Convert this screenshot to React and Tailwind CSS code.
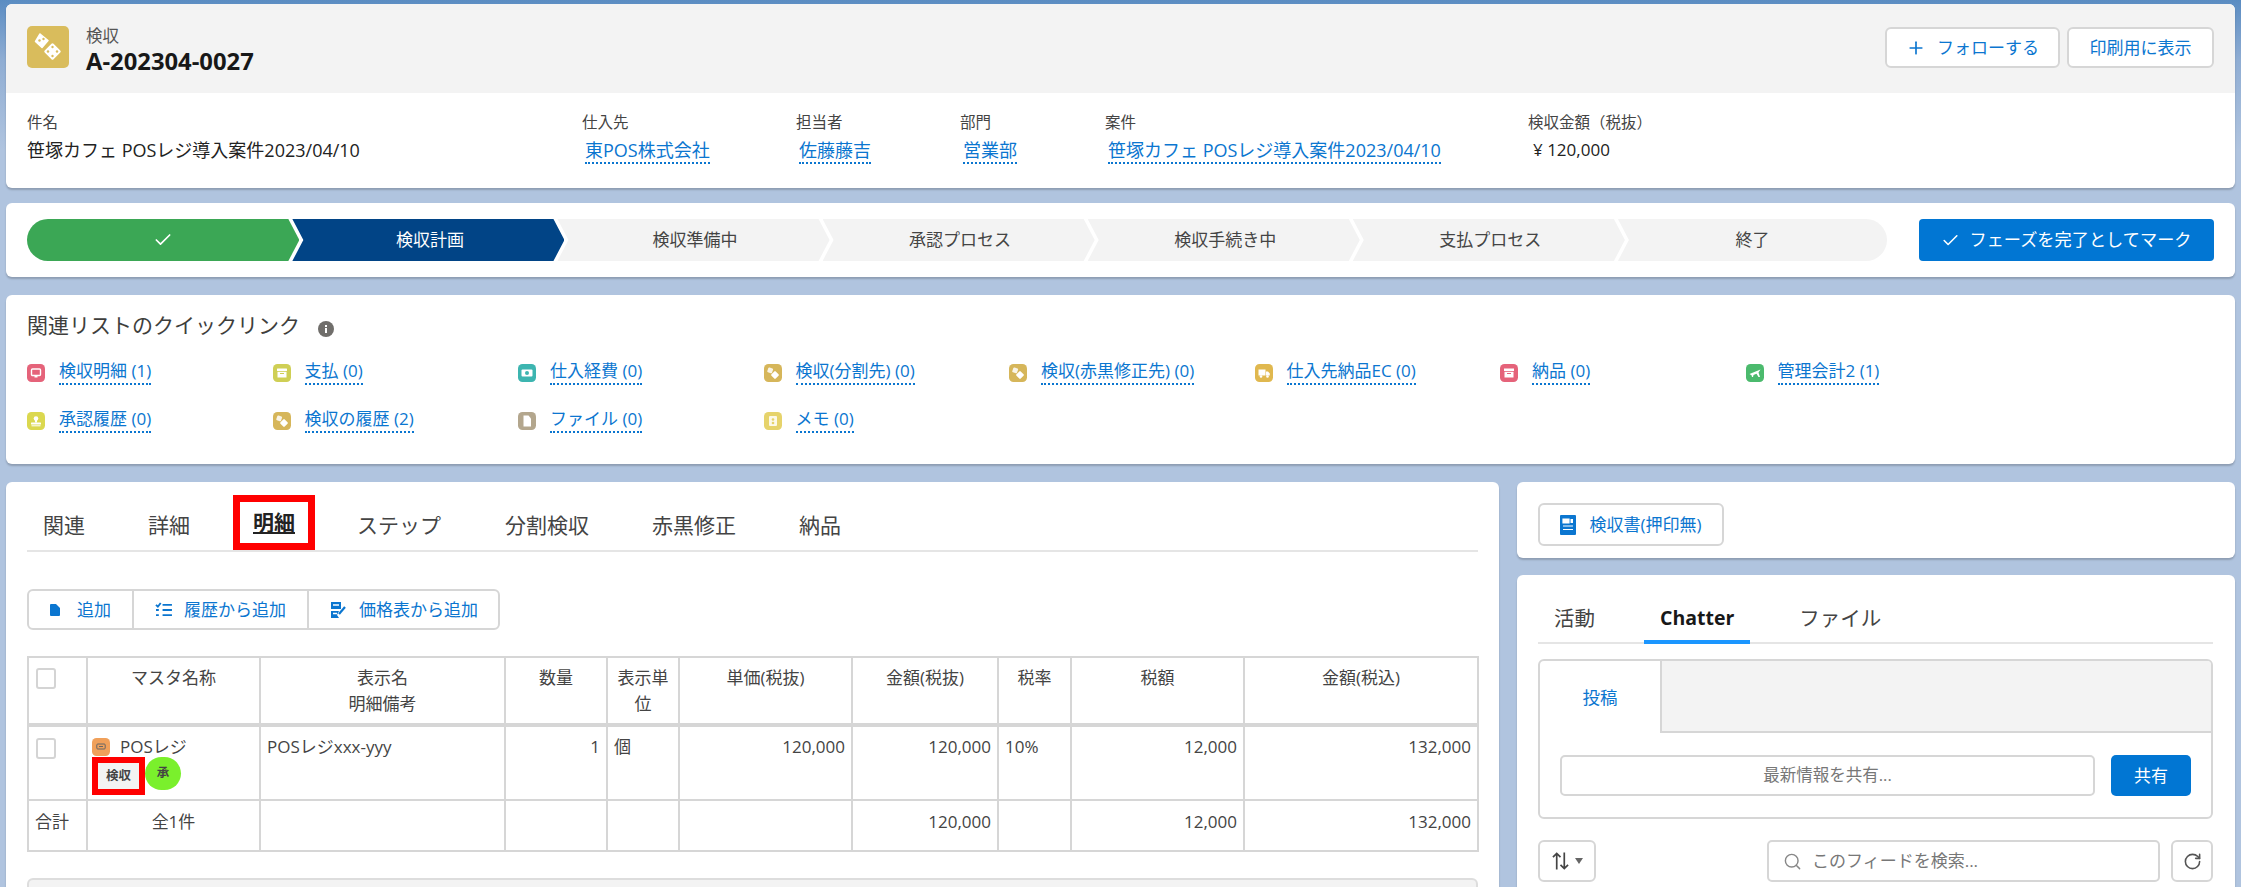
import React from "react";
import { Check, Plus, Search, RotateCw } from "lucide-react";

const Dice = () => (
  <svg viewBox="0 0 42 42" className="w-[42px] h-[42px]">
    <path d="M13 8 L21 14.500 L15 21.500 L8.500 15.500 Z" fill="#fff" stroke="#fff" strokeWidth="1.500" strokeLinejoin="round" />
    <rect x="19.250" y="19.250" width="12.500" height="12.500" rx="1.500" transform="rotate(45 25.500 25.500)" fill="#fff" />
    <circle cx="12.500" cy="14.500" r="1.200" fill="#d9bc5c" />
    <circle cx="16.500" cy="13" r="1.200" fill="#d9bc5c" />
    <circle cx="25.500" cy="21" r="1.200" fill="#d9bc5c" />
    <circle cx="21" cy="25.500" r="1.200" fill="#d9bc5c" />
    <circle cx="30" cy="25.500" r="1.200" fill="#d9bc5c" />
    <circle cx="25.500" cy="30" r="1.200" fill="#d9bc5c" />
  </svg>
);

const glyphs = {
  monitor: (
    <>
      <rect x="4.500" y="5" width="9" height="6.500" rx="1" fill="none" stroke="#fff" strokeWidth="1.400" />
      <rect x="7.500" y="12" width="3" height="1.500" fill="#fff" />
    </>
  ),
  box: (
    <>
      <rect x="4" y="4.500" width="10" height="2.500" rx=".5" fill="#fff" />
      <rect x="4.500" y="7.800" width="9" height="5.700" fill="#fff" />
      <rect x="7" y="9" width="4" height="1" fill="#cfcf55" />
    </>
  ),
  money: (
    <>
      <rect x="3.500" y="5.500" width="11" height="7" rx="1" fill="#fff" />
      <circle cx="9" cy="9" r="2" fill="#3db5b0" />
    </>
  ),
  dice: (
    <>
      <rect x="3.800" y="3.800" width="5" height="5" rx="1" transform="rotate(20 6 6)" fill="#fff" opacity=".85" />
      <rect x="8" y="8" width="6" height="6" rx="1" transform="rotate(45 11 11)" fill="#fff" />
    </>
  ),
  truck: (
    <>
      <rect x="3.500" y="5.500" width="7" height="6" fill="#fff" />
      <path d="M11 7.500 H13 L14.800 9.500 V11.500 H11 Z" fill="#fff" />
      <circle cx="6" cy="12.500" r="1.300" fill="#fff" />
      <circle cx="12.500" cy="12.500" r="1.300" fill="#fff" />
    </>
  ),
  archive: (
    <>
      <rect x="4" y="4.500" width="10" height="2.500" fill="#fff" />
      <rect x="4.500" y="7.800" width="9" height="5.700" fill="#fff" />
      <rect x="7" y="9" width="4" height="1" fill="#e5637a" />
    </>
  ),
  plane: <path d="M3.500 10 L14.500 5.500 L12.500 8.500 L14 13 L12.500 13 L10.500 9.800 L7.500 11 L7 13 L6 13 L5.500 11.200 Z" fill="#fff" />,
  stamp: (
    <>
      <circle cx="9" cy="6.500" r="2.300" fill="#fff" />
      <rect x="8" y="7.500" width="2" height="3" fill="#fff" />
      <rect x="4" y="10.500" width="10" height="2" rx=".5" fill="#fff" />
      <rect x="4.500" y="13.300" width="9" height="1" fill="#fff" />
    </>
  ),
  file: <path d="M5.500 3.500 H10.500 L13 6.500 V14.500 H5.500 Z" fill="#fff" />,
  note: (
    <>
      <rect x="5" y="4" width="8" height="10" rx="1" fill="#fff" opacity=".85" />
      <circle cx="9" cy="7.500" r="1.300" fill="#e6d36b" />
      <circle cx="9" cy="11" r="1.300" fill="#e6d36b" />
    </>
  ),
  lamp: (
    <>
      <rect x="4.800" y="6" width="8.400" height="5" rx="1" fill="none" stroke="#666" strokeWidth="1" />
      <rect x="7" y="8" width="4" height="1" fill="#666" />
    </>
  ),
};

const MiniIcon = ({ color, g }) => (
  <svg viewBox="0 0 18 18" className="w-[18px] h-[18px] shrink-0" style={{ color }}>
    <rect width="18" height="18" rx="4.500" fill="currentColor" />
    {glyphs[g]}
  </svg>
);

const Linked = ({ children, className = "" }) => (
  <span className={"inline-block text-[#0b76d0] border-b-2 border-dotted border-[#0b76d0] leading-[22px] pb-[1px] whitespace-nowrap " + className}>
    {children}
  </span>
);

const Field = ({ label, value, link, w, px, size = "text-[18px]" }) => (
  <div className={"shrink-0 " + w}>
    <div className="text-[15.500px] leading-[20px] text-[#444]">{label}</div>
    <div className={"mt-[6px] leading-[24px] " + size + " " + px}>
      {link ? <Linked>{value}</Linked> : <span className="text-[#222]">{value}</span>}
    </div>
  </div>
);

const quick = [
  ["検収明細 (1)", "#e5637a", "monitor"],
  ["支払 (0)", "#cfcf55", "box"],
  ["仕入経費 (0)", "#3db5b0", "money"],
  ["検収(分割先) (0)", "#d6b65a", "dice"],
  ["検収(赤黒修正先) (0)", "#d6b65a", "dice"],
  ["仕入先納品EC (0)", "#e0b84f", "truck"],
  ["納品 (0)", "#e5637a", "archive"],
  ["管理会計2 (1)", "#4bba6d", "plane"],
  ["承認履歴 (0)", "#dbd84f", "stamp"],
  ["検収の履歴 (2)", "#d6b65a", "dice"],
  ["ファイル (0)", "#b3a68d", "file"],
  ["メモ (0)", "#e6d36b", "note"],
];

const steps = ["検収準備中", "承認プロセス", "検収手続き中", "支払プロセス"];
const chevron =
  "[clip-path:polygon(0_0,calc(100%-11px)_0,100%_50%,calc(100%-11px)_100%,0_100%,11px_50%)]";

const Th = ({ children }) => (
  <th className="border-2 border-[#d6d6d6] border-b-[4px] px-[6px] pt-[7px] align-top text-center font-normal text-[17px] leading-[26px] text-[#444]">
    {children}
  </th>
);
const Td = ({ children, right, className = "" }) => (
  <td className={"border-2 border-[#d6d6d6] px-[6px] pt-[7px] align-top text-[17px] leading-[26px] text-[#444] " + (right ? "text-right " : "") + className}>
    {children}
  </td>
);
const Box = () => <div className="w-[20px] h-[21px] rounded-[3px] border-2 border-[#d4d4d4] bg-white" />;

const Btn = ({ children, className = "" }) => (
  <div className={"flex items-center justify-center rounded-[6px] border-2 border-[#d6d6d6] bg-white text-[#0b76d0] text-[17px] " + className}>
    {children}
  </div>
);

export default function App() {
  return (
    <div className="w-[2241px] h-[887px] overflow-hidden px-[6px] pt-[4px] bg-[linear-gradient(180deg,#5a8cc2_0px,#8fadd3_60px,#b0c4df_150px)] font-['Open_Sans','Noto_Sans_CJK_JP',sans-serif]">
      {/* record header */}
      <div className="h-[184px] w-[2229px] rounded-[6px] overflow-hidden bg-white shadow-[0_2px_2px_rgba(0,0,0,0.2)]">
        <div className="h-[89px] bg-[#f3f3f3] flex items-start justify-between pl-[21px] pr-[21px] pt-[22px]">
          <div className="flex items-start">
            <div className="w-[42px] h-[42px] rounded-[5px] bg-[#d9bc5c]">
              <Dice />
            </div>
            <div className="ml-[17px]">
              <div className="text-[16.500px] leading-[20px] text-[#555]">検収</div>
              <div className="text-[23.800px] leading-[30px] font-bold text-[#181818]">A-202304-0027</div>
            </div>
          </div>
          <div className="flex gap-[7px] pt-[1px]">
            <Btn className="w-[175px] h-[41px] gap-[11px]">
              <Plus size={20} strokeWidth={2} />
              <span>フォローする</span>
            </Btn>
            <Btn className="w-[147px] h-[41px]">印刷用に表示</Btn>
          </div>
        </div>
        <div className="flex pl-[21px] pt-[19px]">
          <Field label="件名" value="笹塚カフェ POSレジ導入案件2023/04/10" w="w-[555px]" px="" />
          <Field label="仕入先" value="東POS株式会社" link w="w-[214px]" px="pl-[3px]" />
          <Field label="担当者" value="佐藤藤吉" link w="w-[164px]" px="pl-[3px]" />
          <Field label="部門" value="営業部" link w="w-[145px]" px="pl-[3px]" />
          <Field label="案件" value="笹塚カフェ POSレジ導入案件2023/04/10" link w="w-[423px]" px="pl-[3px]" />
          <Field label="検収金額（税抜）" value="¥ 120,000" w="w-[300px]" px="pl-[5px]" size="text-[17px]" />
        </div>
      </div>

      {/* path */}
      <div className="mt-[15px] h-[74px] w-[2229px] rounded-[6px] bg-white shadow-[0_2px_2px_rgba(0,0,0,0.2)] flex items-start pl-[21px] pr-[21px] pt-[16px] gap-[32px]">
        <div className="flex flex-1 h-[42px] text-[17px] text-[#444]">
          <div className={"flex-[1.012] flex items-center justify-center bg-[#3ba755] text-white rounded-l-full [clip-path:polygon(0_0,calc(100%-11px)_0,100%_50%,calc(100%-11px)_100%,0_100%)]"}>
            <Check size={20} strokeWidth={2} />
          </div>
          <div className={"flex-1 -ml-[7px] pl-[3px] flex items-center justify-center bg-[#014486] text-white " + chevron}>検収計画</div>
          {steps.map((s) => (
            <div key={s} className={"flex-1 -ml-[7px] pl-[3px] flex items-center justify-center bg-[#f3f3f3] " + chevron}>
              {s}
            </div>
          ))}
          <div className="flex-1 -ml-[7px] flex items-center justify-center bg-[#f3f3f3] rounded-r-full [clip-path:polygon(0_0,100%_0,100%_100%,0_100%,11px_50%)]">終了</div>
        </div>
        <div className="w-[295px] h-[42px] rounded-[4px] bg-[#0176d3] text-white text-[17.200px] flex items-center justify-center gap-[9px]">
          <Check size={19} strokeWidth={2} />
          <span>フェーズを完了としてマーク</span>
        </div>
      </div>

      {/* quick links */}
      <div className="mt-[18px] h-[169px] w-[2229px] rounded-[6px] bg-white shadow-[0_2px_2px_rgba(0,0,0,0.2)] pl-[21px] pt-[15px]">
        <div className="flex items-center h-[30px]">
          <span className="text-[21px] leading-[30px] text-[#3e3e3c]">関連リストのクイックリンク</span>
          <svg viewBox="0 0 16 16" className="w-[16px] h-[16px] ml-[18px] mt-[8px]">
            <circle cx="8" cy="8" r="8" fill="#706e6b" />
            <rect x="7" y="7" width="2" height="5" fill="#fff" />
            <rect x="7" y="4" width="2" height="2" fill="#fff" />
          </svg>
        </div>
        <div className="grid grid-cols-[repeat(8,245.500px)] auto-rows-[48px] mt-[20px] items-start">
          {quick.map(([t, c, g]) => (
            <div key={t} className="flex items-center gap-[14px] text-[17px]">
              <MiniIcon color={c} g={g} />
              <Linked>{t}</Linked>
            </div>
          ))}
        </div>
      </div>

      {/* main area */}
      <div className="mt-[18px] flex gap-[18px] w-[2229px]">
        <div className="w-[1493px] h-[500px] rounded-[6px] bg-white px-[21px] pt-[14px] shadow-[0_2px_2px_rgba(0,0,0,0.2)]">
          <div className="flex items-center h-[56px] border-b-2 border-[#e5e5e5] pl-[16px] text-[21px] text-[#444]">
            <span className="mr-[63px] mt-[5px]">関連</span>
            <span className="mr-[43px] mt-[5px]">詳細</span>
            <span className="mr-[42px] h-[55px] w-[82px] -mt-[1px] border-[7px] border-[#ff0000] flex items-center justify-center font-bold text-[#222] underline">明細</span>
            <span className="mr-[64px] mt-[5px]">ステップ</span>
            <span className="mr-[63px] mt-[5px]">分割検収</span>
            <span className="mr-[63px] mt-[5px]">赤黒修正</span>
            <span className="mt-[5px]">納品</span>
          </div>

          <div className="mt-[37px] flex w-[473px] h-[41px] rounded-[6px] border-2 border-[#d6d6d6] text-[#0b76d0] text-[17px]">
            <div className="w-[105px] flex items-center justify-center gap-[17px] border-r-2 border-[#d6d6d6]">
              <svg viewBox="0 0 10 12" className="w-[10px] h-[12px]"><path d="M1 0 H6 L10 4 V11 Q10 12 9 12 H1 Q0 12 0 11 V1 Q0 0 1 0 Z" fill="currentColor" /></svg>
              <span>追加</span>
            </div>
            <div className="w-[175px] flex items-center justify-center gap-[12px] border-r-2 border-[#d6d6d6]">
              <svg viewBox="0 0 18 16" className="w-[17px] h-[15px]" fill="none" stroke="currentColor" strokeWidth="2">
                <path d="M1 3 L3 5 L6 1" />
                <path d="M8 3 H18 M8 8.500 H18 M8 14 H18 M1 8.500 H4 M1 14 H4" />
              </svg>
              <span>履歴から追加</span>
            </div>
            <div className="flex-1 flex items-center justify-center gap-[12px]">
              <svg viewBox="0 0 18 18" className="w-[18px] h-[18px]">
                <path d="M2 1 H12 V8 H2 Z M2 10 H10 L8 14 L10 17 H2 Z" fill="currentColor" />
                <path d="M4 4 H10 M4 12.500 H8" stroke="#fff" strokeWidth="1.500" />
                <path d="M10 13 L16 6" stroke="currentColor" strokeWidth="2.200" />
              </svg>
              <span>価格表から追加</span>
            </div>
          </div>

          <table className="mt-[26px] w-[1450px] table-fixed border-collapse">
            <colgroup>
              <col className="w-[59px]" />
              <col className="w-[173px]" />
              <col className="w-[245px]" />
              <col className="w-[102px]" />
              <col className="w-[72px]" />
              <col className="w-[173px]" />
              <col className="w-[146px]" />
              <col className="w-[73px]" />
              <col className="w-[173px]" />
              <col className="w-[234px]" />
            </colgroup>
            <thead>
              <tr className="h-[68px]">
                <th className="border-2 border-[#d6d6d6] border-b-[4px] pl-[7px] pt-[10px] align-top font-normal"><Box /></th>
                <Th>マスタ名称</Th>
                <Th>表示名<br />明細備考</Th>
                <Th>数量</Th>
                <Th>表示単位</Th>
                <Th>単価(税抜)</Th>
                <Th>金額(税抜)</Th>
                <Th>税率</Th>
                <Th>税額</Th>
                <Th>金額(税込)</Th>
              </tr>
            </thead>
            <tbody>
              <tr className="h-[75px]">
                <td className="border-2 border-[#d6d6d6] pl-[7px] pt-[11px] align-top"><Box /></td>
                <td className="border-2 border-[#d6d6d6] pl-[4px] pt-[10px] align-top text-[17px] text-[#444]">
                  <div className="flex items-center h-[20px] gap-[10px]">
                    <MiniIcon color="#f0a05a" g="lamp" />
                    <span>POSレジ</span>
                  </div>
                  <div className="flex items-start">
                    <span className="w-[53px] h-[38px] border-[6px] border-[#ff0000] bg-[#f3f3f3] flex items-center justify-center text-[12.500px] font-bold text-[#444]">検収</span>
                    <span className="w-[36px] h-[33px] rounded-full bg-[#7af02c] flex items-center justify-center text-[12.500px] font-bold text-[#444]">承</span>
                  </div>
                </td>
                <Td>POSレジxxx-yyy</Td>
                <Td right>1</Td>
                <Td>個</Td>
                <Td right>120,000</Td>
                <Td right>120,000</Td>
                <Td>10%</Td>
                <Td right>12,000</Td>
                <Td right>132,000</Td>
              </tr>
              <tr className="h-[51px]">
                <Td className="!pt-[8px]">合計</Td>
                <Td className="text-center !pt-[8px]">全1件</Td>
                <Td />
                <Td />
                <Td />
                <Td />
                <Td right className="!pt-[8px]">120,000</Td>
                <Td />
                <Td right className="!pt-[8px]">12,000</Td>
                <Td right className="!pt-[8px]">132,000</Td>
              </tr>
            </tbody>
          </table>

          <div className="mt-[26px] h-[60px] rounded-t-[6px] border-2 border-[#dddddd] bg-[#f3f3f3]" />
        </div>

        <div className="flex-1 flex flex-col gap-[17px]">
          <div className="h-[76px] rounded-[6px] bg-white pl-[21px] pt-[21px] shadow-[0_2px_2px_rgba(0,0,0,0.2)]">
            <Btn className="w-[186px] h-[43px] gap-[13px]">
              <svg viewBox="0 0 16 20" className="w-[16px] h-[20px]">
                <rect width="16" height="20" rx="1" fill="currentColor" />
                <path d="M3 4 H9 V8 H3 Z M3 11 H13 M3 14.500 H13" fill="#fff" stroke="#fff" strokeWidth="1.200" />
                <rect x="10.500" y="4" width="2.500" height="4" fill="#fff" />
              </svg>
              <span>検収書(押印無)</span>
            </Btn>
          </div>
          <div className="h-[400px] rounded-[6px] bg-white pl-[21px] pr-[22px] pt-[27px] shadow-[0_2px_2px_rgba(0,0,0,0.2)]">
            <div className="flex h-[42px] gap-[33px] border-b-2 border-[#e5e5e5] text-[20.500px] text-[#444]">
              <div className="px-4 leading-[32px]">活動</div>
              <div className="px-4 leading-[32px] h-[42px] text-[19.500px] font-bold text-[#181818] border-b-[4px] border-[#1b96ff]">Chatter</div>
              <div className="px-4 leading-[32px]">ファイル</div>
            </div>
            <div className="mt-[15px] h-[160px] rounded-[6px] border-2 border-[#d6d6d6] overflow-hidden">
              <div className="flex h-[72px]">
                <div className="w-[120px] flex items-center justify-center text-[#0b76d0] text-[17.500px]">投稿</div>
                <div className="flex-1 bg-[#f3f3f3] border-l-2 border-b-2 border-[#d6d6d6]" />
              </div>
              <div className="flex gap-[16px] px-[20px] pt-[22px]">
                <div className="flex-1 h-[41px] rounded-[5px] border-2 border-[#d6d6d6] flex items-center justify-center text-[16.500px] text-[#777]">最新情報を共有...</div>
                <div className="w-[80px] h-[41px] rounded-[5px] bg-[#0176d3] text-white text-[17px] flex items-center justify-center">共有</div>
              </div>
            </div>
            <div className="mt-[21px] flex items-start gap-[11px]">
              <Btn className="w-[58px] h-[42px] gap-[6px] !text-[#555]">
                <svg viewBox="0 0 18 20" className="w-[17px] h-[20px]" fill="none" stroke="#444" strokeWidth="1.800">
                  <path d="M5 19 V2 M1 6 L5 2 L9 6 M13 1 V18 M9 14 L13 18 L17 14" />
                </svg>
                <svg viewBox="0 0 8 6" className="w-[8px] h-[6px]"><path d="M0 0 H8 L4 6 Z" fill="#666" /></svg>
              </Btn>
              <div className="flex-1" />
              <div className="w-[393px] h-[42px] rounded-[5px] border-2 border-[#d6d6d6] flex items-center pl-[14px] gap-[10px] text-[#777] text-[17px]">
                <Search size={19} strokeWidth={1.800} className="text-[#888]" />
                <span>このフィードを検索...</span>
              </div>
              <Btn className="w-[42px] h-[42px] !text-[#555]">
                <RotateCw size={19} strokeWidth={2} />
              </Btn>
            </div>
          </div>
        </div>
      </div>
    </div>
  );
}
